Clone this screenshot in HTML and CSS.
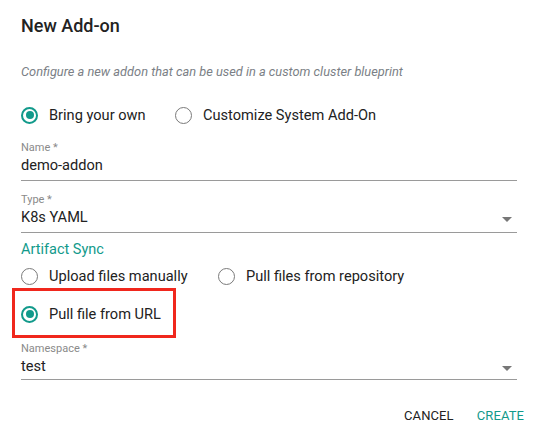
FILE: index.html
```html
<!DOCTYPE html>
<html>
<head>
<meta charset="utf-8">
<link rel="stylesheet" href="styles.css">
</head>
<body>
<div class="dialog">
  <h1 class="title">New Add-on</h1>
  <p class="desc">Configure a new addon that can be used in a custom cluster blueprint</p>

  <div class="radio-row row-1">
    <label class="radio"><span class="circle checked"></span><span>Bring your own</span></label>
    <label class="radio"><span class="circle"></span><span>Customize System Add-On</span></label>
  </div>

  <div class="field field-name">
    <div class="label">Name *</div>
    <div class="value">demo-addon</div>
  </div>

  <div class="field field-type">
    <div class="label">Type *</div>
    <div class="value select">K8s YAML<span class="arrow"></span></div>
  </div>

  <div class="section">Artifact Sync</div>

  <div class="radio-row row-2">
    <label class="radio"><span class="circle"></span><span>Upload files manually</span></label>
    <label class="radio"><span class="circle"></span><span>Pull files from repository</span></label>
  </div>

  <div class="highlight">
    <label class="radio"><span class="circle checked"></span><span>Pull file from URL</span></label>
  </div>

  <div class="field field-ns">
    <div class="label">Namespace *</div>
    <div class="value select">test<span class="arrow"></span></div>
  </div>

  <div class="actions">
    <button class="btn cancel">CANCEL</button>
    <button class="btn create">CREATE</button>
  </div>
</div>
</body>
</html>
```

FILE: styles.css
```css
* { box-sizing: border-box; }
html, body { margin: 0; padding: 0; background: #fff; }
body {
  font-family: Roboto, "Liberation Sans", Arial, sans-serif;
  color: #222;
  width: 535px;
  height: 439px;
  overflow: hidden;
}
.dialog {
  padding: 14px 18px 0 21px;
}
.title {
  margin: 0;
  font-size: 18px;
  line-height: 24px;
  font-weight: 500;
  color: #222;
}
.desc {
  margin: 26px 0 0;
  font-size: 12.8px;
  line-height: 16px;
  font-style: italic;
  color: #7b7f86;
}
.radio-row {
  display: flex;
  align-items: center;
  height: 24px;
}
.row-1 { margin-top: 23px; }
.row-1 .radio:first-child { width: 154px; }
.row-2 { margin-top: 4px; }
.row-2 .radio:first-child { width: 197px; }
.radio {
  display: flex;
  align-items: center;
  font-size: 14.6px;
  line-height: 20px;
  color: #222;
}
.circle {
  width: 17px;
  height: 17px;
  border-radius: 50%;
  border: 1.5px solid #7a7a7a;
  margin-right: 11px;
  flex: none;
  display: flex;
  align-items: center;
  justify-content: center;
}
.circle.checked {
  border: 2px solid #129a8b;
}
.circle.checked::after {
  content: "";
  width: 8px;
  height: 8px;
  border-radius: 50%;
  background: #129a8b;
}
.field {
  border-bottom: 1px solid #9a9a9a;
}
.field-name { margin-top: 14px; padding-bottom: 5px; }
.field-type { margin-top: 12px; padding-bottom: 5px; }
.field-ns { margin-top: 4px; padding-bottom: 3px; }
.label {
  font-size: 11px;
  line-height: 14px;
  color: #8a8a8a;
}
.value {
  font-size: 14.6px;
  line-height: 20px;
  color: #222;
}
.select {
  display: flex;
  align-items: center;
  justify-content: space-between;
}
.arrow {
  width: 0;
  height: 0;
  border-left: 5px solid transparent;
  border-right: 5px solid transparent;
  border-top: 5px solid #777;
  margin-right: 5px;
  margin-top: 4px;
}
.section {
  margin-top: 7px;
  font-size: 14.5px;
  line-height: 20px;
  color: #129a8b;
}
.highlight {
  display: inline-flex;
  align-items: center;
  margin-left: -9px;
  width: 164px;
  height: 50px;
  border: 3px solid #f0271d;
  padding: 2px 0 0 6px;
}
.actions {
  display: flex;
  justify-content: flex-end;
  gap: 23px;
  margin-top: 28px;
  margin-right: -7px;
}
.btn {
  background: none;
  border: none;
  padding: 0;
  font-family: inherit;
  font-size: 13px;
  line-height: 16px;
  letter-spacing: 0.1px;
  cursor: pointer;
}
.cancel { color: #222; }
.create { color: #129a8b; }
```
